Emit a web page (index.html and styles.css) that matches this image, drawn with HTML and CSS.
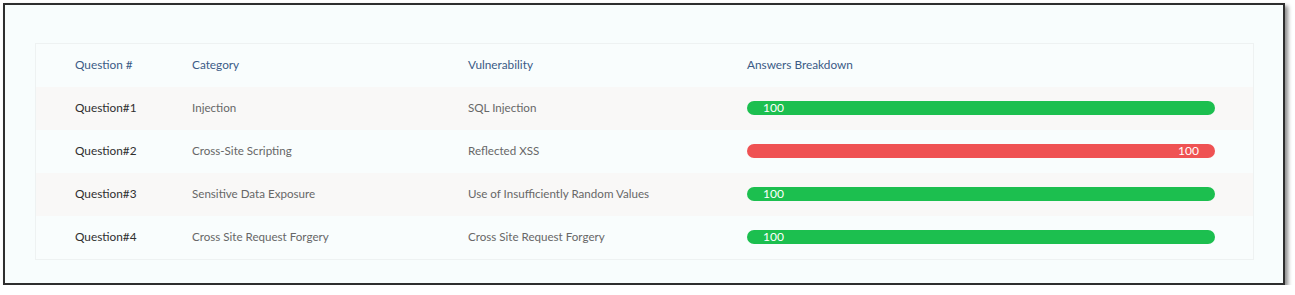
FILE: index.html
```html
<!DOCTYPE html>
<html>
<head>
<meta charset="utf-8">
<link rel="stylesheet" href="styles.css">
</head>
<body>
<div class="frame">
  <div class="card">
    <div class="row head">
      <div>Question #</div>
      <div>Category</div>
      <div>Vulnerability</div>
      <div>Answers Breakdown</div>
    </div>
    <div class="row striped">
      <div class="q">Question#1</div>
      <div class="t">Injection</div>
      <div class="t">SQL Injection</div>
      <div><div class="bar green">100</div></div>
    </div>
    <div class="row">
      <div class="q">Question#2</div>
      <div class="t">Cross-Site Scripting</div>
      <div class="t">Reflected XSS</div>
      <div><div class="bar red">100</div></div>
    </div>
    <div class="row striped">
      <div class="q">Question#3</div>
      <div class="t">Sensitive Data Exposure</div>
      <div class="t">Use of Insufficiently Random Values</div>
      <div><div class="bar green">100</div></div>
    </div>
    <div class="row">
      <div class="q">Question#4</div>
      <div class="t">Cross Site Request Forgery</div>
      <div class="t">Cross Site Request Forgery</div>
      <div><div class="bar green">100</div></div>
    </div>
  </div>
</div>
</body>
</html>
```
FILE: styles.css
```css
html, body {
  margin: 0;
  padding: 0;
  background: #ffffff;
}
body {
  font-family: Lato, "Liberation Sans", sans-serif;
  font-size: 12px;
}
.frame {
  margin: 3px 0 0 3px;
  width: 1219px;
  height: 240px;
  border: 2px solid #2e2e2e;
  background: #f8fdfd;
  box-shadow: 3px 3px 4px rgba(0, 0, 0, 0.45);
  padding: 38px 29px 0 30px;
  box-sizing: content-box;
}
.card {
  width: 1217px;
  border: 1px solid #eef2f2;
  background: #f9fdfd;
}
.row {
  display: grid;
  grid-template-columns: 117px 276px 279px 1fr;
  align-items: center;
  height: 43px;
  padding: 0 38px 2px 39px;
  box-sizing: border-box;
  font-size: 11.6px;
}
.head {
  color: #3b5b86;
  font-size: 11.8px;
}
.striped {
  background: #f9f8f7;
}
.q {
  color: #2f2f2f;
  font-size: 11.8px;
}
.t {
  color: #676767;
}
.bar {
  height: 14px;
  border-radius: 7px;
  color: #ffffff;
  font-size: 12px;
  line-height: 14px;
  padding: 0 16px;
}
.green {
  background: #1cbf4f;
}
.red {
  background: #ef5253;
  text-align: right;
}
```
